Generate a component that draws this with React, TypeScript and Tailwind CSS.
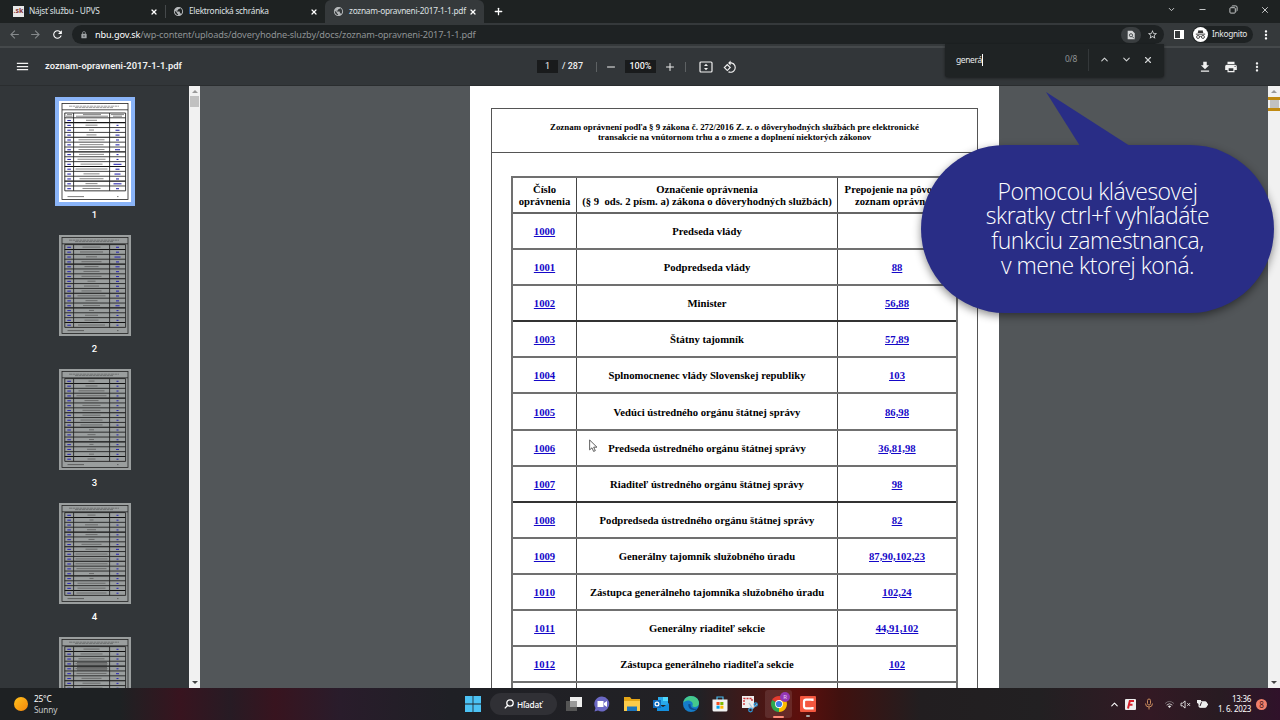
import { ChevronDown, ChevronUp, Minus, Plus, X } from "lucide-react";
import {
  MdArrowBack,
  MdArrowForward,
  MdDownload,
  MdLock,
  MdMenu,
  MdMoreVert,
  MdPrint,
  MdPublic,
  MdRefresh,
  MdStarBorder,
} from "react-icons/md";

type Row = {
  id: string;
  name: string;
  links: string;
  solid?: boolean;
};

const rows: Row[] = [
  { id: "1000", name: "Predseda vlády", links: "" },
  { id: "1001", name: "Podpredseda vlády", links: "88" },
  { id: "1002", name: "Minister", links: "56,88", solid: true },
  { id: "1003", name: "Štátny tajomník", links: "57,89" },
  { id: "1004", name: "Splnomocnenec vlády Slovenskej republiky", links: "103" },
  { id: "1005", name: "Vedúci ústredného orgánu štátnej správy", links: "86,98" },
  { id: "1006", name: "Predseda ústredného orgánu štátnej správy", links: "36,81,98" },
  { id: "1007", name: "Riaditeľ ústredného orgánu štátnej správy", links: "98", solid: true },
  { id: "1008", name: "Podpredseda ústredného orgánu štátnej správy", links: "82" },
  { id: "1009", name: "Generálny tajomník služobného úradu", links: "87,90,102,23" },
  { id: "1010", name: "Zástupca generálneho tajomníka služobného úradu", links: "102,24" },
  { id: "1011", name: "Generálny riaditeľ sekcie", links: "44,91,102" },
  { id: "1012", name: "Zástupca generálneho riaditeľa sekcie", links: "102" },
];

// Widths of the text lines (middle column, right column) in each thumbnail
const thumbs: number[][][] = [
  [[11, 0], [12, 2], [5, 4], [10, 4], [26, 3], [24, 4], [26, 5], [25, 2], [28, 2], [22, 8], [32, 4], [16, 6], [24, 3], [12, 8], [18, 3]],
  [[18, 3], [23, 3], [11, 6], [20, 3], [14, 4], [16, 3], [20, 3], [8, 3], [15, 3], [20, 3], [28, 3], [12, 3], [17, 4], [5, 2], [13, 2], [14, 2], [27, 2]],
  [[6, 2], [12, 2], [26, 2], [30, 2], [14, 2], [18, 2], [18, 2], [18, 2], [22, 2], [22, 2], [5, 2], [8, 2], [5, 2], [4, 2], [9, 3], [5, 2], [8, 2]],
  [[8, 2], [4, 2], [13, 2], [9, 2], [12, 2], [6, 2], [20, 2], [12, 3], [32, 3], [32, 2], [32, 2], [30, 2], [5, 2], [4, 2], [28, 2], [28, 2], [30, 2]],
  [[16, 2], [22, 2], [26, 2], [32, 2], [32, 2], [30, 3], [20, 2], [18, 2], [22, 2], [14, 2], [19, 2], [18, 2], [20, 2], [20, 2], [20, 2], [20, 2], [20, 2]],
];

function ThumbPage({ index }: { index: number }) {
  const lines = thumbs[index];
  const first = index === 0;
  const top = first ? 16.8 : 9.6;
  return (
    <svg viewBox="0 0 72 101" className={first ? "block h-[101px] w-[72px] bg-white" : "block h-[101px] w-[72px] bg-[#9a9e9e]"}>
      <rect x="3" y="2.5" width="66" height="96" fill="none" stroke="#222" strokeWidth="0.8" />
      <path d="M3 8.8H69" stroke="#222" strokeWidth="0.8" />
      <path d="M10 5.2H60M16 6.6H54" stroke="#444" strokeWidth="0.5" strokeDasharray="3 .5" />
      {first && (
        <>
          <path d="M5.6 12H66.6" stroke="#222" strokeWidth="0.9" />
          <path d="M8 13.6H13M24 13.6H42M52 13.6H65M7 15.2H13.5M17 15.2H49M54 15.2H63" stroke="#333" strokeWidth="0.6" />
        </>
      )}
      {lines.map((line, i) => {
        const y = top + i * 4.87;
        return (
          <g key={i}>
            <path d={`M5.6 ${y}H66.6`} stroke="#111" strokeWidth={i % 3 === 1 ? 1.1 : 0.8} />
            <path d={`M8.3 ${y + 2.7}h3.6`} stroke="#2d2bb0" strokeWidth="1.1" />
            <path d={`M${32.5 - line[0] / 2} ${y + 2.5}h${line[0]}`} stroke="#555" strokeWidth="0.7" />
            {index === 4 && i > 2 && i < 5 && (
              <path d={`M18 ${y + 1.3}h30M18 ${y + 3.8}h30`} stroke="#444" strokeWidth="0.7" />
            )}
            <path d={`M${58.5 - line[1] / 2} ${y + 2.7}h${line[1]}`} stroke="#2d2bb0" strokeWidth="1.1" />
          </g>
        );
      })}
      <path
        d={`M5.8 ${first ? 12 : top}V${top + lines.length * 4.87}H66.6V${first ? 12 : top}M14.6 ${first ? 12 : top}V${top + lines.length * 4.87}M50.6 ${first ? 12 : top}V${top + lines.length * 4.87}`}
        fill="none"
        stroke="#222"
        strokeWidth="0.9"
      />
      <path d="M8.5 95.6H25M58 95.6H59.5" stroke="#444" strokeWidth="0.7" />
    </svg>
  );
}

function Tab({ title, icon, width, active }: { title: string; icon: React.ReactNode; width: string; active?: boolean }) {
  return (
    <div className={`flex h-[23px] items-center pr-[7px] pl-[13px] ${width} ${active ? "rounded-t-[6px] bg-[#35393b]" : ""}`}>
      <span className="flex w-4 shrink-0">{icon}</span>
      <span className="flex-1 text-[8.3px] tracking-[-0.25px] whitespace-nowrap text-[#dfe1e3]">{title}</span>
      <X className="size-[8px] text-white" strokeWidth={3.6} />
    </div>
  );
}

function TabStrip() {
  return (
    <div className="flex h-[23px] bg-[#1e2222]">
      <Tab
        width="w-[165px]"
        title="Nájsť službu - UPVS"
        icon={<span className="flex size-[11px] items-center justify-center bg-[#e8e8e8] text-[7px] font-bold text-[#8a3535]">.sk</span>}
      />
      <span className="mt-[5px] h-[13px] w-px bg-[#45494b]" />
      <Tab width="w-[159px] !pl-[7px]" title="Elektronická schránka" icon={<MdPublic className="size-[11px] text-[#b5b8ba]" />} />
      <Tab width="w-[159px] !pl-[8px]" title="zoznam-opravneni-2017-1-1.pdf" active icon={<MdPublic className="size-[11px] text-[#b5b8ba]" />} />
      <Plus className="mt-[6px] ml-[9px] size-[11px] text-white" strokeWidth={2.8} />
      <div className="ml-auto flex items-center gap-[22px] pr-[10px] pb-[4px] text-[#d5d7d8]">
        <ChevronDown className="size-[9px]" strokeWidth={2.4} />
        <Minus className="size-[9px]" strokeWidth={2.4} />
        <svg viewBox="0 0 10 10" className="size-[9px]" fill="none" stroke="currentColor">
          <rect x="1" y="3" width="6" height="6" rx="1" />
          <path d="M3 1.5Q3.500 1 4.500 1H7.500Q9 1 9 2.500V5.500Q9 6.500 8.500 7" />
        </svg>
        <X className="size-[10px]" strokeWidth={2.2} />
      </div>
    </div>
  );
}

function AddressBar() {
  return (
    <div className="flex h-[25px] items-center border-b-2 border-[#45494b] bg-[#35393b]">
      <MdArrowBack className="ml-[8px] size-[13px] text-[#85898b]" />
      <MdArrowForward className="ml-[8px] size-[13px] text-[#85898b]" />
      <MdRefresh className="ml-[9px] size-[13px] text-white" />
      <div className="ml-[8px] flex h-[19px] w-[1092px] items-center rounded-full bg-[#1e2223] pl-[8px]">
        <MdLock className="size-[8px] text-[#a0a4a6]" />
        <span className="ml-[7px] text-[9.2px] tracking-[-0.13px] text-[#8f9395]">
          <span className="text-white">nbu.gov.sk</span>/wp-content/uploads/doveryhodne-sluzby/docs/zoznam-opravneni-2017-1-1.pdf
        </span>
        <span className="ml-auto flex h-[16px] w-[20px] items-center justify-center rounded-full bg-[#3a3e40]">
          <svg viewBox="0 0 12 12" className="size-[10px]">
            <path d="M2 1H7.500L10.500 4V11H2Z" fill="#d5d7d8" />
            <circle cx="6" cy="6.300" r="1.900" fill="none" stroke="#33373a" />
            <path d="M7.500 7.800L9.600 10" stroke="#33373a" />
          </svg>
        </span>
        <MdStarBorder className="mr-[6px] ml-[6px] size-[11px] text-[#d5d7d8]" />
      </div>
      <span className="ml-[10px] flex h-[9px] w-[10px] border-[1.5px] border-r-[4px] border-white" />
      <div className="ml-[8px] flex h-[17px] w-[61px] items-center rounded-full bg-[#1e2223] pl-px">
        <svg viewBox="0 0 16 16" className="size-[15px]">
          <circle cx="8" cy="8" r="8" fill="#fff" />
          <path d="M5 6.500L5.800 3.500Q8 4.200 10.200 3.500L11 6.500Z" fill="#333" />
          <path d="M3 7.600H13" stroke="#333" strokeWidth="1" />
          <g fill="none" stroke="#333" strokeWidth="0.9">
            <circle cx="5.400" cy="10.600" r="1.600" />
            <circle cx="10.600" cy="10.600" r="1.600" />
            <path d="M7 10.300Q8 9.700 9 10.300" />
          </g>
        </svg>
        <span className="ml-[4px] text-[8.3px] tracking-[-0.3px] text-[#e5e7e8]">Inkognito</span>
      </div>
      <MdMoreVert className="ml-[6px] size-[14px] text-white" />
    </div>
  );
}

function PdfToolbar() {
  return (
    <div className="flex h-[38px] items-center border-b border-[#2a2d2f] bg-[#323639] font-[Roboto] text-[#f1f1f1]">
      <MdMenu className="ml-[15px] size-[15px]" />
      <span className="ml-[15px] w-[492px] text-[9.4px] font-semibold">zoznam-opravneni-2017-1-1.pdf</span>
      <span className="flex h-[13px] w-[21px] items-center justify-center bg-[#191b1c] text-[9px]">1</span>
      <span className="ml-[4px] w-[34px] text-[9px] font-medium">/ 287</span>
      <span className="h-[10px] w-px bg-[#5d6163]" />
      <Minus className="ml-[8px] size-[12px]" />
      <span className="ml-[8px] flex h-[13px] w-[31px] items-center justify-center bg-[#191b1c] text-[9px] font-medium">100%</span>
      <Plus className="ml-[8px] size-[12px]" />
      <span className="ml-[9px] h-[10px] w-px bg-[#5d6163]" />
      <svg viewBox="0 0 14 12" className="ml-[13px] h-[12px] w-[14px]">
        <rect x="1" y="1" width="12" height="10" rx="1" fill="none" stroke="currentColor" strokeWidth="1.2" />
        <path d="M7 2.800L9 5H5ZM7 9.200L5 7H9Z" fill="currentColor" />
      </svg>
      <svg viewBox="0 0 24 24" className="ml-[10px] size-[14px]" fill="currentColor">
        <path d="M7.340 6.410L.86 12.900l6.490 6.480 6.490-6.480-6.500-6.490zM3.690 12.900l3.660-3.660L11 12.900l-3.660 3.660-3.650-3.660zm15.670-6.260C17.610 4.880 15.300 4 13 4V.76L8.760 5 13 9.240V6c1.790 0 3.580.68 4.950 2.050 2.730 2.730 2.730 7.170 0 9.900C16.580 19.320 14.790 20 13 20c-.97 0-1.940-.21-2.840-.61l-1.490 1.490C10.020 21.620 11.510 22 13 22c2.300 0 4.610-.88 6.360-2.640 3.520-3.510 3.520-9.210 0-12.720z" />
      </svg>
      <div className="ml-auto flex items-center gap-[12px] pr-[16px]">
        <MdDownload className="size-[14px]" />
        <MdPrint className="size-[14px]" />
        <MdMoreVert className="size-[14px]" />
      </div>
    </div>
  );
}

function FindBar() {
  return (
    <div className="absolute top-[44px] left-[945px] flex h-[33px] w-[219px] items-center rounded-b-[3px] bg-[#1f2324] pb-[2px] shadow-[0_1px_3px_rgba(0,0,0,0.5)]">
      <span className="ml-[11px] border-r border-white text-[8.5px] leading-[12px] tracking-[-0.4px] text-[#e8eaec]">generá</span>
      <span className="ml-auto text-[8.4px] tracking-[-0.2px] text-[#8f9395]">0/8</span>
      <span className="mr-[10px] ml-[11px] h-[22px] w-px bg-[#34383a]" />
      <div className="flex items-center gap-[11px] pr-[11px] text-[#d0d2d3]">
        <ChevronUp className="size-[11px]" strokeWidth={2.4} />
        <ChevronDown className="size-[11px]" strokeWidth={2.4} />
        <X className="size-[10px]" strokeWidth={2.8} />
      </div>
    </div>
  );
}

function Sidebar() {
  return (
    <aside className="flex w-[189px] shrink-0 flex-col items-center overflow-hidden bg-[#323639] font-[Roboto] text-[9.5px] font-medium text-white">
      {thumbs.map((_, i) => (
        <div key={i} className={i === 0 ? "mt-[11px] flex h-[138px] shrink-0 flex-col items-center" : "flex h-[134px] shrink-0 flex-col items-center"}>
          <div className={i === 0 ? "border-4 border-[#8ab4f8] bg-[#8ab4f8]" : ""}>
            <ThumbPage index={i} />
          </div>
          {i < 4 && <span className={i === 0 ? "mt-[3px] leading-[12px]" : "mt-[7px] leading-[12px]"}>{i + 1}</span>}
        </div>
      ))}
    </aside>
  );
}

function Document() {
  return (
    <div className="ml-[270px] h-[602px] w-[529px] shrink-0 overflow-hidden bg-white pt-[22px] pl-[21px] font-['Liberation_Serif',serif] font-bold text-black">
      <div className="h-[640px] w-[487px] border border-[#555]">
        <div className="flex h-[44px] flex-col items-center justify-center border-b border-[#555] pt-[3px] text-[8.9px] leading-[10px] whitespace-nowrap">
          <span>Zoznam oprávnení podľa § 9 zákona č. 272/2016 Z. z. o dôveryhodných službách pre elektronické</span>
          <span>transakcie na vnútornom trhu a o zmene a doplnení niektorých zákonov</span>
        </div>
        <div className="mt-[23px] ml-[19px] w-[447px] border-2 border-[#707070] text-[10.68px] leading-[12px]">
          <div className="grid h-[36px] grid-cols-[64px_261px_1fr] divide-x divide-[#444] border-b-2 border-[#666] text-center whitespace-nowrap">
            <div className="flex flex-col items-center justify-center">
              <span>Číslo</span>
              <span>oprávnenia</span>
            </div>
            <div className="flex flex-col items-center justify-center">
              <span>Označenie oprávnenia</span>
              <span className="whitespace-pre">(§ 9  ods. 2 písm. a) zákona o dôveryhodných službách)</span>
            </div>
            <div className="flex flex-col items-center justify-center">
              <span>Prepojenie na pôvodný</span>
              <span>zoznam oprávnení</span>
            </div>
          </div>
          {rows.map((row) => (
            <div
              key={row.id}
              className={`grid h-[36.1px] grid-cols-[64px_261px_1fr] items-stretch divide-x divide-[#444] border-b-2 text-center whitespace-nowrap ${row.solid ? "border-[#333]" : "border-[#707070]"}`}
            >
              <div className="flex items-center justify-center text-[#1508c8] underline">{row.id}</div>
              <div className="flex items-center justify-center">{row.name}</div>
              <div className="flex items-center justify-center text-[#1508c8] underline">{row.links}</div>
            </div>
          ))}
          <div className="grid h-[36px] grid-cols-[64px_261px_1fr] divide-x divide-[#444]">
            <div />
            <div />
            <div />
          </div>
        </div>
      </div>
    </div>
  );
}

function Callout() {
  return (
    <div className="absolute top-[145px] left-[921px] flex h-[168px] w-[353px] flex-col items-center justify-center rounded-[84px] bg-[#292d86] pb-[2px] text-center font-['Open_Sans','Noto_Sans',sans-serif] text-[23px] leading-[24.7px] font-light tracking-[-0.5px] whitespace-nowrap text-white shadow-[0_3px_8px_rgba(0,0,0,0.45)]">
      <svg viewBox="0 0 84 54" className="absolute top-[-53px] left-[125px] h-[54px] w-[84px]">
        <path d="M0 0L84 54H34Z" fill="#292d86" />
      </svg>
      <span>Pomocou klávesovej</span>
      <span>skratky ctrl+f vyhľadáte</span>
      <span>funkciu zamestnanca,</span>
      <span>v mene ktorej koná.</span>
    </div>
  );
}

function Taskbar() {
  return (
    <footer className="flex h-[32px] items-center bg-[linear-gradient(90deg,#1e2123_0,#1e2123_120px,#38141f_180px,#271b24_230px,#38141f_275px,#291c2b_340px,#1f2025_450px,#222125_700px,#4b1614_765px,#5d0f0c_800px,#40110f_840px,#221e20_920px,#222022_1040px,#331924_1150px,#281b22_1220px,#30122a_1280px)] text-[8.3px] leading-[11px] tracking-[-0.2px] text-white">
      <span className="ml-[14px] size-[14px] rounded-full bg-linear-to-br from-[#ffc21c] to-[#f5850b]" />
      <div className="ml-[6px] w-[431px]">
        <div>25°C</div>
        <div className="text-[#c6c8ca]">Sunny</div>
      </div>
      <svg viewBox="0 0 16 16" className="size-[16px]" fill="#4cc2f4">
        <path d="M0 0h7.600v7.600H0zM8.400 0H16v7.600H8.400zM0 8.400h7.600V16H0zM8.400 8.400H16V16H8.400z" />
      </svg>
      <div className="ml-[9px] flex h-[22px] w-[67px] items-center rounded-full bg-[#303035] pl-[14px]">
        <svg viewBox="0 0 10 10" className="size-[10px]" fill="none" stroke="white" strokeWidth="1.300">
          <circle cx="6" cy="4" r="3.200" />
          <path d="M3.800 6.300L.8 9.400" />
        </svg>
        <span className="ml-[3px] font-medium">Hľadať</span>
      </div>
      {/* Pinned applications */}
      <svg viewBox="0 0 16 16" className="ml-[9px] size-[16px]">
        <path d="M0 5h11v10H0z" fill="#555" />
        <path d="M4 1h12v10H4z" fill="#eee" />
        <path d="M4 5h7v6H4z" fill="#999" />
      </svg>
      <svg viewBox="0 0 16 16" className="ml-[12px] size-[16px]">
        <path d="M8 .5a7.500 7.500 0 1 1-4 14L.5 15.500l1-3.500A7.500 7.500 0 0 1 8 .5z" fill="#6b68c4" />
        <path d="M3.500 5h6v6h-6zM10 7l3-2v6l-3-2z" fill="#fff" />
      </svg>
      <svg viewBox="0 0 16 16" className="ml-[14px] size-[16px]">
        <path d="M0 1h6l1.500 2H16v12H0z" fill="#e5a617" />
        <path d="M0 5h16v10H0z" fill="#fccb4a" />
        <path d="M3 10.500h10V15H3z" fill="#1d75bd" />
      </svg>
      <svg viewBox="0 0 16 16" className="ml-[13px] size-[16px]">
        <path d="M5 1h10v8H5z" fill="#28a8ea" />
        <path d="M10 1h5v4h-5z" fill="#50d9ff" />
        <path d="M4 7l6 4 6-4v8H4z" fill="#1490df" />
        <path d="M0 4h8v8H0z" fill="#0f6cbd" />
        <circle cx="4" cy="8" r="1.900" fill="none" stroke="#fff" strokeWidth="1.200" />
      </svg>
      <svg viewBox="0 0 16 16" className="ml-[14px] size-[16px]">
        <circle cx="8" cy="8" r="8" fill="#157cc8" />
        <path d="M.2 7C1 2.500 4.500 0 8 0c4.500 0 8 3.200 8 7 0 2.800-2 4-4.300 4-2 0-2.700-.8-2.200-1.500C10.800 7 8 4.500 5 4.500 3 4.500 1.200 5.500.2 7z" fill="#45c98c" />
        <path d="M5.500 8c-.8 3 1.500 6 5 6 2 0 3.500-.7 4.200-1.600-2 .8-7.700.6-7.200-4.200z" fill="#0d4c91" />
      </svg>
      <svg viewBox="0 0 16 16" className="ml-[13px] size-[16px]">
        <path d="M5 4V1h6v3" fill="none" stroke="#47b8ec" strokeWidth="1.200" />
        <path d="M.5 3.500h15V14q0 1.500-1.500 1.500H2Q.5 15.500.5 14z" fill="#f2f2f2" />
        <path d="M4.500 6H7.600v3H4.500z" fill="#f25022" />
        <path d="M8.300 6h3.100v3H8.300z" fill="#7fba00" />
        <path d="M4.500 9.700h3.100v3H4.500z" fill="#00a4ef" />
        <path d="M8.300 9.700h3.100v3H8.300z" fill="#ffb900" />
      </svg>
      <svg viewBox="0 0 17 17" className="ml-[13px] size-[17px]">
        <path d="M1 0h12v12H1z" fill="#eee" />
        <path d="M3 9V2.500h8V6" fill="none" stroke="#d13438" strokeWidth="1.400" strokeDasharray="2 1" />
        <path d="M8 7l4 6M16 8l-5 5" stroke="#b8c5cf" strokeWidth="1.300" />
        <circle cx="9.500" cy="14" r="1.800" fill="none" stroke="#2d9bdd" strokeWidth="1.200" />
        <circle cx="14.700" cy="8.500" r="1.600" fill="none" stroke="#2d9bdd" strokeWidth="1.200" />
      </svg>
      <span className="relative ml-[7px] flex h-[28px] w-[27px] items-center justify-center rounded-[3px] bg-white/10">
        <svg viewBox="0 0 16 16" className="size-[16px]">
          <path d="M8 8L1.100 4A8 8 0 0 1 14.900 4z" fill="#e33b2e" />
          <path d="M8 8L1.100 4a8 8 0 0 0 6.900 12z" fill="#2da94f" />
          <path d="M8 8h0l0 8A8 8 0 0 0 14.900 4H8z" fill="#fdbd00" />
          <circle cx="8" cy="8" r="3.900" fill="#fff" />
          <circle cx="8" cy="8" r="3.100" fill="#3f7de8" />
        </svg>
        <span className="absolute top-[2px] right-[2px] flex size-[10px] items-center justify-center rounded-full bg-[#9437b4] text-[6px] text-[#ead0f2]">R</span>
        <span className="absolute bottom-0 left-[8px] h-[2px] w-[11px] rounded-full bg-[#ff8c78]" />
      </span>
      <span className="relative ml-[8px]">
        <svg viewBox="0 0 16 16" className="size-[16px]">
          <rect width="16" height="16" rx="1" fill="#f4573f" />
          <path d="M12.500 5V3.700H6Q4 3.700 4 5.700v4.600q0 2 2 2h6.500V11" fill="none" stroke="#fff" strokeWidth="2.200" />
        </svg>
        <span className="absolute -bottom-[5px] left-[6px] h-[2px] w-[4px] rounded-full bg-[#aaa]" />
      </span>
      {/* System tray */}
      <div className="ml-auto flex items-center">
        <ChevronUp className="size-[11px]" strokeWidth={2.3} />
        <svg viewBox="0 0 11 11" className="ml-[5px] size-[11px]">
          <rect width="11" height="11" rx="1" fill="#eee" />
          <path d="M3 9.500L4.800 2H9M4 5.700H7.500" fill="none" stroke="#d5202a" strokeWidth="2" />
        </svg>
        <svg viewBox="0 0 10 12" className="ml-[8px] h-[12px] w-[10px]" fill="none" stroke="#c98b5d">
          <rect x="3.500" y="1" width="3" height="6" rx="1.500" />
          <path d="M1.500 5.500Q1.500 9 5 9T8.500 5.500M5 9v2.500" />
        </svg>
        <svg viewBox="0 0 12 10" className="ml-[10px] h-[9px] w-[11px]" fill="none" stroke="#ccc">
          <path d="M1 4Q6-.8 11 4" stroke="#776e73" />
          <path d="M2.800 5.700Q6 2.600 9.200 5.700" />
          <path d="M4.200 7Q6 5.200 7.800 7L6 9z" fill="#eee" stroke="none" />
        </svg>
        <svg viewBox="0 0 12 10" className="ml-[5px] h-[9px] w-[11px]" fill="none" stroke="#eee">
          <path d="M1 3.500h1.800L5.500 1v8L2.800 6.500H1zM8 3.500l3 3M11 3.500l-3 3" />
        </svg>
        <svg viewBox="0 0 12 10" className="ml-[5px] h-[10px] w-[12px]">
          <rect x="3" y="2.800" width="7.500" height="5.500" rx="1" fill="#eee" stroke="#eee" />
          <path d="M11 4.500h1v2h-1zM1 1h4v3.500L3.500 6H3V5L1 4z" fill="#eee" />
          <path d="M5.500 3.200L4 7" stroke="#30202a" />
        </svg>
        <div className="ml-[9px] w-[34px] text-right text-[8px] leading-[10.500px] tracking-[-0.3px] whitespace-nowrap">
          <div>13:36</div>
          <div>1. 6. 2023</div>
        </div>
        <span className="mr-[13px] ml-[5px] flex size-[11px] items-center justify-center rounded-full bg-[#f0806c] text-[8px] text-[#4c1a1a]">8</span>
      </div>
    </footer>
  );
}

export default function App() {
  return (
    <div className="relative flex h-[720px] w-[1280px] flex-col overflow-hidden bg-[#525659] font-['Noto_Sans','Open_Sans',sans-serif]">
      <TabStrip />
      <AddressBar />
      <PdfToolbar />
      <main className="flex h-[602px] bg-[#525659]">
        <Sidebar />
        <div className="flex w-[11px] shrink-0 flex-col items-center bg-[#f1f1f1]">
          <span className="mt-[4px] border-x-[3px] border-b-[3px] border-x-transparent border-b-[#999]" />
          <span className="mt-[3px] h-[11px] w-[9px] bg-[#c1c1c1]" />
          <span className="mt-auto mb-[4px] border-x-[3px] border-t-[3px] border-x-transparent border-t-[#444]" />
        </div>
        <Document />
        <div className="ml-auto flex w-[12px] shrink-0 flex-col items-center bg-[#f1f1f1]">
          <span className="mt-[4px] border-x-[3px] border-b-[3px] border-x-transparent border-b-[#999]" />
          <span className="mt-[4px] flex h-[14px] w-full justify-center border-y-[3px] border-[#c08a12] bg-[#f1f1f1]">
            <span className="w-[9px] bg-[#c1c1c1]" />
          </span>
          <span className="mt-auto mb-[4px] border-x-[3px] border-t-[3px] border-x-transparent border-t-[#444]" />
        </div>
      </main>
      <Taskbar />
      <FindBar />
      <Callout />
      {/* Mouse pointer */}
      <svg viewBox="0 0 10 15" className="absolute top-[439px] left-[589px] h-[14px] w-[9px]">
        <path d="M.7.8v11l2.600-2.300 1.800 4 1.900-.8-1.800-3.900h3.600z" fill="#fff" stroke="#222" strokeWidth="0.800" />
      </svg>
    </div>
  );
}
